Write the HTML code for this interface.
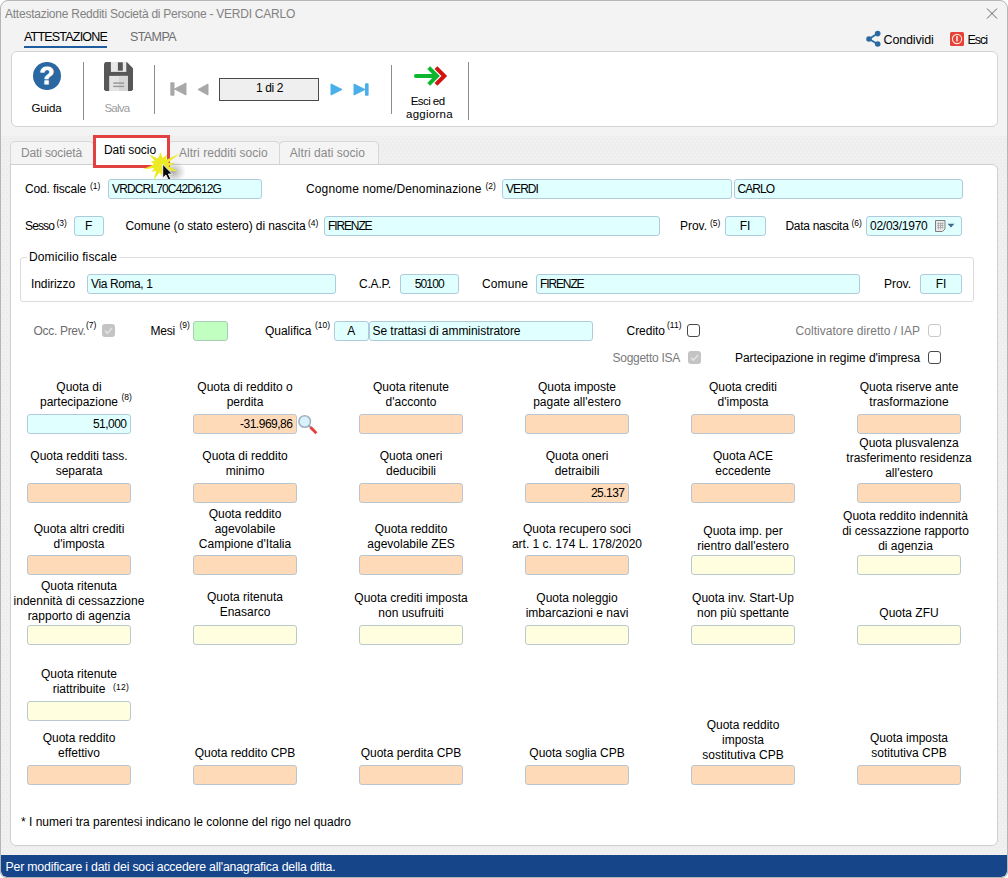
<!DOCTYPE html>
<html lang="it"><head><meta charset="utf-8"><title>Attestazione Redditi Società di Persone</title>
<style>
*{box-sizing:border-box;margin:0;padding:0}
html,body{width:1008px;height:878px;overflow:hidden;background:#fff}
body{font-family:"Liberation Sans",sans-serif;font-size:12px;color:#000}
#win{position:absolute;left:0;top:0;width:1008px;height:878px;background:#f3f3f3;border:1px solid #b6b6b6;border-radius:8px 8px 6px 6px;overflow:hidden}
.t{position:absolute;white-space:pre;line-height:1;height:auto}
.b{position:absolute}
.in{border:1px solid #afcadb;border-radius:3px;background:#e0ffff;font-size:12px;line-height:18px;white-space:pre;overflow:hidden}
.pe{background:#ffdab9;border-color:#b9c6cf}
.ye{background:#ffffe0;border-color:#b9c9cf}
.gr{background:#c1ffc1;border-color:#a9cdb9}
.lbl{position:absolute;width:180px;text-align:center;line-height:15px;font-size:12px;white-space:pre}
.cb{position:absolute;width:13px;height:13px;border:1px solid #484848;border-radius:3px;background:#fff}
.cb.dis{border-color:#c8c8c8}
.cb.chk{border:none;background:#c4c4c4}
.sep{position:absolute;width:1px;background:#8c8c8c}
.tab{position:absolute;top:141px;height:24px;border:1px solid #d6d6d6;border-bottom:none;border-radius:5px 5px 0 0;background:#f4f4f4}
</style></head>
<body>
<div id="win">
<div style="position:absolute;left:-1px;top:-1px;width:1008px;height:878px">
<div class="t " style="top:8px;font-size:12px;color:#828282;letter-spacing:-0.242px;left:5px;">Attestazione Redditi Società di Persone - VERDI CARLO</div>
<svg class="b" style="left:985px;top:7px" width="14" height="14" viewBox="0 0 14 14"><path d="M2 1.5 L12 11.5 M12 1.5 L2 11.5" stroke="#666" stroke-width="1" fill="none"/></svg>
<div class="t " style="top:31px;font-size:12.5px;color:#000;letter-spacing:-0.800px;left:24px;">ATTESTAZIONE</div>
<div class="b " style="left:24px;top:46px;width:83.0px;height:2.0px;background:#1f5c9e"></div>
<div class="t " style="top:31px;font-size:12.5px;color:#6e6e6e;letter-spacing:-0.590px;left:130px;">STAMPA</div>
<svg class="b" style="left:865px;top:30px" width="17" height="18" viewBox="0 0 17 18"><path d="M4 9 L12.5 3.5 M4 9 L12.5 14" stroke="#2a6aa2" stroke-width="1.8" fill="none"/><circle cx="4" cy="9" r="2.8" fill="#2a6aa2"/><circle cx="12.7" cy="3.6" r="2.8" fill="#2a6aa2"/><circle cx="12.7" cy="14" r="2.8" fill="#2a6aa2"/></svg>
<div class="t " style="top:34px;font-size:12.5px;color:#000;letter-spacing:-0.157px;left:883.6px;">Condividi</div>
<svg class="b" style="left:950px;top:32px" width="14" height="14" viewBox="0 0 14 14"><rect width="14" height="14" rx="1.5" fill="#e8403a"/><circle cx="7" cy="7" r="4.6" fill="none" stroke="#ffe9c8" stroke-width="1.1"/><rect x="6.3" y="4" width="1.4" height="5.4" fill="#fff"/></svg>
<div class="t " style="top:34px;font-size:12.5px;color:#000;letter-spacing:-1.029px;left:967.4px;">Esci</div>
<div class="b " style="left:11px;top:51px;width:986.5px;height:75.5px;background:#fff;border:1px solid #d4d4d4;border-radius:6px"></div>
<div class="b" style="left:32.7px;top:61.7px;width:28.6px;height:28.6px;border-radius:50%;background:#2b68a2"></div>
<div class="t" style="left:27px;width:40px;text-align:center;top:63.5px;font-size:24.5px;font-weight:bold;color:#fff;-webkit-text-stroke:0.8px #fff">?</div>
<div class="t " style="top:103px;font-size:11.5px;color:#000;letter-spacing:-0.097px;left:31.4px;">Guida</div>
<div class="sep" style="left:83px;top:62px;height:58px"></div>
<svg class="b" style="left:104px;top:62px" width="29" height="29" viewBox="0 0 29 29"><path d="M1.5 0 H22.8 L29 6.2 V27.5 L27.5 29 H1.5 L0 27.5 V1.5Z" fill="#575757"/><rect x="6.9" y="0" width="15.4" height="9.9" fill="#e9e9e9"/><rect x="13.9" y="0.3" width="4.9" height="8.4" fill="#575757"/><rect x="5.2" y="13.9" width="18.6" height="15.1" fill="#e4e4e4"/><rect x="15" y="13.9" width="8.8" height="15.1" fill="#d6d6d6"/><rect x="9.2" y="20.4" width="10.9" height="1.4" fill="#969696"/><rect x="9.2" y="23.7" width="10.9" height="1.4" fill="#969696"/></svg>
<div class="t " style="top:103px;font-size:11.5px;color:#9b9b9b;letter-spacing:-0.753px;left:104.4px;">Salva</div>
<div class="sep" style="left:154px;top:65px;height:49px"></div>
<svg class="b" style="left:170px;top:82px" width="17" height="14" viewBox="0 0 17 14"><rect x="0.3" y="0.3" width="4.2" height="13.4" rx="1" fill="#a8a8a8"/><path d="M16 1 V13 L4.5 7Z" fill="#a8a8a8" stroke="#a8a8a8" stroke-width="1" stroke-linejoin="round"/></svg>
<svg class="b" style="left:196.5px;top:82.5px" width="12" height="13" viewBox="0 0 12 13"><path d="M11 1 V12 L1 6.5Z" fill="#a8a8a8" stroke="#a8a8a8" stroke-width="1" stroke-linejoin="round"/></svg>
<div class="b " style="left:219px;top:78px;width:100.0px;height:22.5px;background:#efefef;border:1px solid #4a4a4a"></div>
<div class="t " style="top:82px;font-size:12px;color:#000;letter-spacing:-0.393px;left:256px;">1 di 2</div>
<svg class="b" style="left:330px;top:83px" width="13" height="13" viewBox="0 0 13 13"><path d="M1 1 V12 L12 6.5Z" fill="#4aaee8" stroke="#4aaee8" stroke-width="1" stroke-linejoin="round"/></svg>
<svg class="b" style="left:353px;top:83px" width="16" height="13" viewBox="0 0 16 13"><path d="M1 1 V12 L12 6.5Z" fill="#4aaee8" stroke="#4aaee8" stroke-width="1" stroke-linejoin="round"/><rect x="12" y="0.3" width="3.6" height="12.4" rx="0.8" fill="#4aaee8"/></svg>
<div class="sep" style="left:391px;top:65px;height:49px"></div>
<svg class="b" style="left:413px;top:65px" width="36" height="22" viewBox="0 0 36 22"><path d="M23 2.7 L31.3 11 L23 19.3" fill="none" stroke="#d4120f" stroke-width="4" stroke-linejoin="miter" stroke-miterlimit="6"/><path d="M3 11 H23" fill="none" stroke="#0eb62f" stroke-width="4" stroke-linecap="round"/><path d="M15.7 2.7 L24 11 L15.7 19.3" fill="none" stroke="#0eb62f" stroke-width="4" stroke-linejoin="miter"/></svg>
<div class="t " style="top:96px;font-size:11.5px;color:#000;letter-spacing:-0.559px;left:410.7px;">Esci ed</div>
<div class="t " style="top:109px;font-size:11.5px;color:#000;letter-spacing:0.255px;left:406px;">aggiorna</div>
<div class="sep" style="left:468px;top:62px;height:58px"></div>
<div class="b " style="left:1px;top:136px;width:1006.0px;height:720.0px;background-color:#f0f0f0;background-image:radial-gradient(circle,#e3e3e3 0.5px,transparent 0.8px),radial-gradient(circle,#e3e3e3 0.5px,transparent 0.8px);background-size:4px 6px;background-position:0 0,2px 3px"></div>
<div class="tab" style="left:10px;width:83.5px"></div>
<div class="tab" style="left:168px;width:111.5px"></div>
<div class="tab" style="left:279px;width:99.5px"></div>
<div class="b " style="left:10px;top:164px;width:988.0px;height:682.0px;background:#fff;border:1px solid #cfcfcf;border-radius:0 6px 6px 6px"></div>
<div class="t " style="top:147px;font-size:12px;color:#8a8a8a;letter-spacing:-0.141px;left:21px;">Dati società</div>
<div class="t " style="top:147px;font-size:12px;color:#8a8a8a;letter-spacing:0.030px;left:179px;">Altri redditi socio</div>
<div class="t " style="top:147px;font-size:12px;color:#8a8a8a;letter-spacing:0.032px;left:289.8px;">Altri dati socio</div>
<div class="b " style="left:93.3px;top:135.3px;width:77.0px;height:32.7px;background:#fff;border:3px solid #e24141"></div>
<div class="t " style="top:144px;font-size:12px;color:#000;letter-spacing:-0.069px;left:104px;">Dati socio</div>
<svg class="b" style="left:138px;top:146px" width="56" height="42" viewBox="0 0 56 42"><defs><radialGradient id="sh"><stop offset="0" stop-color="#555" stop-opacity=".5"/><stop offset=".55" stop-color="#666" stop-opacity=".22"/><stop offset="1" stop-color="#666" stop-opacity="0"/></radialGradient></defs><ellipse cx="35" cy="26" rx="13" ry="11" fill="url(#sh)"/><path d="M22.5 6.0 L24.7 12.2 L29.0 8.5 L28.0 14.0 L42.2 7.2 L29.8 16.8 L37.0 17.5 L30.1 20.1 L40.0 25.6 L28.5 23.9 L32.0 35.3 L25.1 26.1 L24.0 30.0 L21.7 26.3 L15.4 34.3 L18.3 24.7 L13.5 26.0 L16.4 22.1 L4.4 23.4 L15.8 18.5 L13.0 14.8 L17.0 15.3 L10.9 8.2 L20.0 12.7Z" fill="#ecea24"/><circle cx="23" cy="19.2" r="7.6" fill="#ecea24"/><path d="M24.7 18.2 V32 L27.9 29 L30.6 34.4 L33 33.3 L30.4 28 H34.4Z" fill="#0a0a0a" stroke="#fff" stroke-width="0.9" stroke-linejoin="round"/></svg>
<div class="t " style="top:183px;font-size:12px;color:#000;letter-spacing:-0.141px;left:25px;">Cod. fiscale</div>
<div class="t " style="top:182px;font-size:8.5px;color:#000;left:90px;">(1)</div>
<div class="b in " style="left:108px;top:179px;width:154.0px;height:20.0px;padding-left:3px;text-align:left;letter-spacing:-0.858px;">VRDCRL70C42D612G</div>
<div class="t " style="top:183px;font-size:12px;color:#000;letter-spacing:0.131px;left:306px;">Cognome nome/Denominazione</div>
<div class="t " style="top:182px;font-size:8.5px;color:#000;left:485.5px;">(2)</div>
<div class="b in " style="left:502px;top:179px;width:230.0px;height:20.0px;padding-left:3px;text-align:left;letter-spacing:-0.935px;">VERDI</div>
<div class="b in " style="left:733.5px;top:179px;width:229.0px;height:20.0px;padding-left:3px;text-align:left;letter-spacing:-0.969px;">CARLO</div>
<div class="t " style="top:220px;font-size:12px;color:#000;letter-spacing:-0.870px;left:25px;">Sesso</div>
<div class="t " style="top:219px;font-size:8.5px;color:#000;left:56.5px;">(3)</div>
<div class="b in " style="left:74px;top:216px;width:29.5px;height:19.7px;text-align:center;">F</div>
<div class="t " style="top:220px;font-size:12px;color:#000;letter-spacing:-0.101px;left:125.5px;">Comune (o stato estero) di nascita</div>
<div class="t " style="top:219px;font-size:8.5px;color:#000;left:308px;">(4)</div>
<div class="b in " style="left:324px;top:216px;width:336.0px;height:19.7px;padding-left:3px;text-align:left;letter-spacing:-1.119px;">FIRENZE</div>
<div class="t " style="top:220px;font-size:12px;color:#000;letter-spacing:-0.023px;left:680px;">Prov.</div>
<div class="t " style="top:219px;font-size:8.5px;color:#000;left:710px;">(5)</div>
<div class="b in " style="left:724.5px;top:216px;width:41.0px;height:19.7px;text-align:center;">FI</div>
<div class="t " style="top:220px;font-size:12px;color:#000;letter-spacing:-0.309px;left:785.5px;">Data nascita</div>
<div class="t " style="top:219px;font-size:8.5px;color:#000;left:851.5px;">(6)</div>
<div class="b in " style="left:866px;top:216px;width:96.0px;height:19.7px;padding-left:3px;text-align:left;letter-spacing:-0.256px;">02/03/1970</div>
<svg class="b" style="left:935px;top:220px" width="21" height="13" viewBox="0 0 21 13"><path d="M0.5 0.5 H10 V9 L7.5 11.5 H0.5Z" fill="#e9e9e9" stroke="#7e7e7e"/><path d="M2 3.5H8.5M2 5.5H8.5M2 7.5H8.5M3.5 2.5V9.5M5.5 2.5V9.5M7.3 2.5V8.5" stroke="#999" stroke-width=".6"/><path d="M12.5 3.8 H19.5 L16 7.4Z" fill="#44678c"/></svg>
<div class="b " style="left:20px;top:257px;width:953.5px;height:45.0px;border:1px solid #dcdcdc;border-radius:3px"></div>
<div class="b " style="left:27px;top:250px;width:91.5px;height:14.0px;background:#fff"></div>
<div class="t " style="top:251px;font-size:12px;color:#000;letter-spacing:0.116px;left:29px;">Domicilio fiscale</div>
<div class="t " style="top:278px;font-size:12px;color:#000;letter-spacing:-0.076px;left:31px;">Indirizzo</div>
<div class="b in " style="left:87px;top:274px;width:249.0px;height:19.7px;padding-left:3px;text-align:left;letter-spacing:-0.392px;">Via Roma, 1</div>
<div class="t " style="top:278px;font-size:12px;color:#000;letter-spacing:-0.188px;left:359px;">C.A.P.</div>
<div class="b in " style="left:400px;top:274px;width:58.5px;height:19.7px;text-align:center;letter-spacing:-0.874px;">50100</div>
<div class="t " style="top:278px;font-size:12px;color:#000;letter-spacing:0.107px;left:482px;">Comune</div>
<div class="b in " style="left:536px;top:274px;width:324.0px;height:19.7px;padding-left:3px;text-align:left;letter-spacing:-1.119px;">FIRENZE</div>
<div class="t " style="top:278px;font-size:12px;color:#000;letter-spacing:-0.023px;left:884px;">Prov.</div>
<div class="b in " style="left:920px;top:274px;width:42.0px;height:19.7px;text-align:center;">FI</div>
<div class="t " style="top:325px;font-size:12px;color:#6d6d6d;letter-spacing:-0.312px;left:33.5px;">Occ. Prev.</div>
<div class="t " style="top:321px;font-size:8.5px;color:#000;left:86px;">(7)</div>
<div class="cb chk" style="left:102px;top:324px"><svg width="13" height="13" viewBox="0 0 13 13"><path d="M3 6.8 L5.4 9.2 L10 4" fill="none" stroke="#e6e6e6" stroke-width="1.3"/></svg></div>
<div class="t " style="top:325px;font-size:12px;color:#000;letter-spacing:-0.209px;left:150.5px;">Mesi</div>
<div class="t " style="top:321px;font-size:8.5px;color:#000;left:179.5px;">(9)</div>
<div class="b in gr" style="left:193px;top:321px;width:35.0px;height:19.5px;"></div>
<div class="t " style="top:325px;font-size:12px;color:#000;letter-spacing:-0.021px;left:265px;">Qualifica</div>
<div class="t " style="top:321px;font-size:8.5px;color:#000;left:315px;">(10)</div>
<div class="b in " style="left:334px;top:321px;width:34.5px;height:19.5px;text-align:center;">A</div>
<div class="b in " style="left:368.5px;top:321px;width:224.5px;height:19.5px;padding-left:3px;text-align:left;letter-spacing:-0.048px;">Se trattasi di amministratore</div>
<div class="t " style="top:325px;font-size:12px;color:#000;letter-spacing:-0.026px;left:626.5px;">Credito</div>
<div class="t " style="top:321px;font-size:8.5px;color:#000;left:667px;">(11)</div>
<div class="cb" style="left:687px;top:324px"></div>
<div class="t " style="top:325px;font-size:12px;color:#7a7a7a;letter-spacing:0.045px;left:795.5px;">Coltivatore diretto / IAP</div>
<div class="cb dis" style="left:928px;top:324px"></div>
<div class="t " style="top:352px;font-size:12px;color:#7a7a7a;letter-spacing:-0.268px;left:612.5px;">Soggetto ISA</div>
<div class="cb chk" style="left:688px;top:351px"><svg width="13" height="13" viewBox="0 0 13 13"><path d="M3 6.8 L5.4 9.2 L10 4" fill="none" stroke="#e6e6e6" stroke-width="1.3"/></svg></div>
<div class="t " style="top:352px;font-size:12px;color:#000;letter-spacing:-0.060px;left:735px;">Partecipazione in regime d'impresa</div>
<div class="cb" style="left:928px;top:351px"></div>
<div class="b in " style="left:27px;top:414px;width:104.0px;height:20.0px;padding-right:3.5px;text-align:right;letter-spacing:-0.520px;">51,000</div>
<div class="lbl" style="left:-11px;top:380px">Quota di
partecipazione</div>
<div class="b in pe" style="left:193px;top:414px;width:104.0px;height:20.0px;padding-right:3.5px;text-align:right;letter-spacing:-0.488px;">-31.969,86</div>
<div class="lbl" style="left:155px;top:380px">Quota di reddito o
perdita</div>
<div class="b in pe" style="left:359px;top:414px;width:104.0px;height:20.0px;padding-right:3.5px;text-align:right;"></div>
<div class="lbl" style="left:321px;top:380px">Quota ritenute
d'acconto</div>
<div class="b in pe" style="left:525px;top:414px;width:104.0px;height:20.0px;padding-right:3.5px;text-align:right;"></div>
<div class="lbl" style="left:487px;top:380px">Quota imposte
pagate all'estero</div>
<div class="b in pe" style="left:691px;top:414px;width:104.0px;height:20.0px;padding-right:3.5px;text-align:right;"></div>
<div class="lbl" style="left:653px;top:380px">Quota crediti
d'imposta</div>
<div class="b in pe" style="left:857px;top:414px;width:104.0px;height:20.0px;padding-right:3.5px;text-align:right;"></div>
<div class="lbl" style="left:819px;top:380px">Quota riserve ante
trasformazione</div>
<div class="b in pe" style="left:27px;top:483px;width:104.0px;height:20.0px;padding-right:3.5px;text-align:right;"></div>
<div class="lbl" style="left:-11px;top:449px">Quota redditi tass.
separata</div>
<div class="b in pe" style="left:193px;top:483px;width:104.0px;height:20.0px;padding-right:3.5px;text-align:right;"></div>
<div class="lbl" style="left:155px;top:449px">Quota di reddito
minimo</div>
<div class="b in pe" style="left:359px;top:483px;width:104.0px;height:20.0px;padding-right:3.5px;text-align:right;"></div>
<div class="lbl" style="left:321px;top:449px">Quota oneri
deducibili</div>
<div class="b in pe" style="left:525px;top:483px;width:104.0px;height:20.0px;padding-right:3.5px;text-align:right;letter-spacing:-0.520px;">25.137</div>
<div class="lbl" style="left:487px;top:449px">Quota oneri
detraibili</div>
<div class="b in pe" style="left:691px;top:483px;width:104.0px;height:20.0px;padding-right:3.5px;text-align:right;"></div>
<div class="lbl" style="left:653px;top:449px">Quota ACE
eccedente</div>
<div class="b in pe" style="left:857px;top:483px;width:104.0px;height:20.0px;padding-right:3.5px;text-align:right;"></div>
<div class="lbl" style="left:819px;top:436px">Quota plusvalenza
trasferimento residenza
all'estero</div>
<div class="b in pe" style="left:27px;top:555px;width:104.0px;height:20.0px;padding-right:3.5px;text-align:right;"></div>
<div class="lbl" style="left:-11px;top:522px">Quota altri crediti
d'imposta</div>
<div class="b in pe" style="left:193px;top:555px;width:104.0px;height:20.0px;padding-right:3.5px;text-align:right;"></div>
<div class="lbl" style="left:155px;top:507px">Quota reddito
agevolabile
Campione d'Italia</div>
<div class="b in pe" style="left:359px;top:555px;width:104.0px;height:20.0px;padding-right:3.5px;text-align:right;"></div>
<div class="lbl" style="left:321px;top:522px">Quota reddito
agevolabile ZES</div>
<div class="b in pe" style="left:525px;top:555px;width:104.0px;height:20.0px;padding-right:3.5px;text-align:right;"></div>
<div class="lbl" style="left:487px;top:522px">Quota recupero soci
art. 1 c. 174 L. 178/2020</div>
<div class="b in ye" style="left:691px;top:555px;width:104.0px;height:20.0px;padding-right:3.5px;text-align:right;"></div>
<div class="lbl" style="left:653px;top:524px">Quota imp. per
rientro dall'estero</div>
<div class="b in ye" style="left:857px;top:555px;width:104.0px;height:20.0px;padding-right:3.5px;text-align:right;"></div>
<div class="lbl" style="left:815.5px;top:509px">Quota reddito indennità
di cessazzione rapporto
di agenzia</div>
<div class="b in ye" style="left:27px;top:625px;width:104.0px;height:20.0px;padding-right:3.5px;text-align:right;"></div>
<div class="lbl" style="left:-11px;top:579px">Quota ritenuta
indennità di cessazzione
rapporto di agenzia</div>
<div class="b in ye" style="left:193px;top:625px;width:104.0px;height:20.0px;padding-right:3.5px;text-align:right;"></div>
<div class="lbl" style="left:155px;top:590px">Quota ritenuta
Enasarco</div>
<div class="b in ye" style="left:359px;top:625px;width:104.0px;height:20.0px;padding-right:3.5px;text-align:right;"></div>
<div class="lbl" style="left:321px;top:591px">Quota crediti imposta
non usufruiti</div>
<div class="b in ye" style="left:525px;top:625px;width:104.0px;height:20.0px;padding-right:3.5px;text-align:right;"></div>
<div class="lbl" style="left:487px;top:591px">Quota noleggio
imbarcazioni e navi</div>
<div class="b in ye" style="left:691px;top:625px;width:104.0px;height:20.0px;padding-right:3.5px;text-align:right;"></div>
<div class="lbl" style="left:653px;top:591px">Quota inv. Start-Up
non più spettante</div>
<div class="b in ye" style="left:857px;top:625px;width:104.0px;height:20.0px;padding-right:3.5px;text-align:right;"></div>
<div class="lbl" style="left:819px;top:606px">Quota ZFU</div>
<div class="b in ye" style="left:27px;top:701px;width:104.0px;height:20.0px;padding-right:3.5px;text-align:right;"></div>
<div class="lbl" style="left:-11px;top:667px">Quota ritenute
riattribuite</div>
<div class="b in pe" style="left:27px;top:765px;width:104.0px;height:20.0px;padding-right:3.5px;text-align:right;"></div>
<div class="lbl" style="left:-11px;top:731px">Quota reddito
effettivo</div>
<div class="b in pe" style="left:193px;top:765px;width:104.0px;height:20.0px;padding-right:3.5px;text-align:right;"></div>
<div class="lbl" style="left:155px;top:746px">Quota reddito CPB</div>
<div class="b in pe" style="left:359px;top:765px;width:104.0px;height:20.0px;padding-right:3.5px;text-align:right;"></div>
<div class="lbl" style="left:321px;top:746px">Quota perdita CPB</div>
<div class="b in pe" style="left:525px;top:765px;width:104.0px;height:20.0px;padding-right:3.5px;text-align:right;"></div>
<div class="lbl" style="left:487px;top:746px">Quota soglia CPB</div>
<div class="b in pe" style="left:691px;top:765px;width:104.0px;height:20.0px;padding-right:3.5px;text-align:right;"></div>
<div class="lbl" style="left:653px;top:718px">Quota reddito
imposta
sostitutiva CPB</div>
<div class="b in pe" style="left:857px;top:765px;width:104.0px;height:20.0px;padding-right:3.5px;text-align:right;"></div>
<div class="lbl" style="left:819px;top:731px">Quota imposta
sotitutiva CPB</div>
<div class="t " style="top:393px;font-size:8.5px;color:#000;left:121.5px;">(8)</div>
<div class="t " style="top:683px;font-size:8.5px;color:#000;letter-spacing:0.221px;left:113px;">(12)</div>
<svg class="b" style="left:297px;top:413px" width="22" height="23" viewBox="0 0 22 23"><path d="M11.6 12.4 L14 14.8" stroke="#8f9cb0" stroke-width="2.2"/><path d="M13.6 14.4 L19.4 20.2" stroke="#e8423b" stroke-width="2.9"/><circle cx="7.7" cy="8.5" r="5.8" fill="#d9f1fa" stroke="#a2b1c1" stroke-width="1.5"/></svg>
<div class="t " style="top:816px;font-size:12px;color:#000;letter-spacing:-0.003px;left:21px;">* I numeri tra parentesi indicano le colonne del rigo nel quadro</div>
<div class="b " style="left:1px;top:855px;width:1006.0px;height:22.0px;background:#17458a;border-radius:0 0 6px 6px"></div>
<div class="t " style="top:861px;font-size:12.3px;color:#fff;letter-spacing:-0.192px;left:5.5px;">Per modificare i dati dei soci accedere all'anagrafica della ditta.</div>
</div></div>
</body></html>
